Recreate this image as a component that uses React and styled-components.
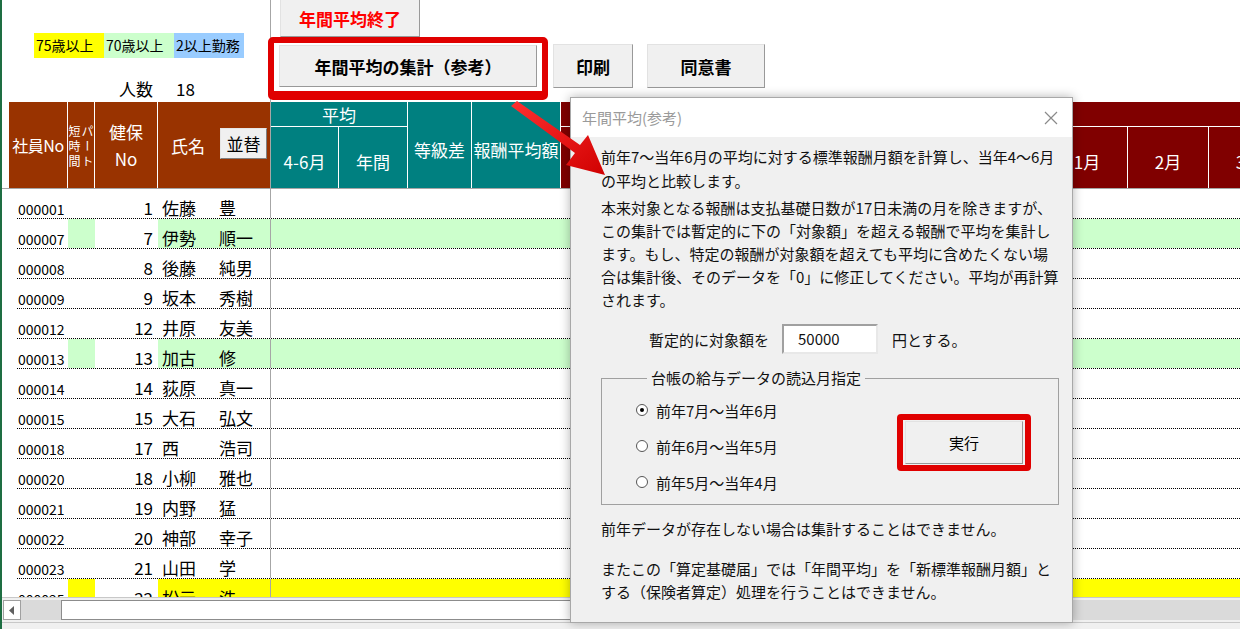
import React from 'react';
import styled, { createGlobalStyle } from 'styled-components';

const FONT = `"Noto Sans CJK JP", "Noto Sans", sans-serif`;

const GlobalStyle = createGlobalStyle`
  html, body { margin: 0; padding: 0; background: #fff; }
  body { font-family: ${FONT}; overflow: hidden; }
  * { box-sizing: border-box; }
`;

const TINTS = { green: '#ccffcc', yellow: '#ffff00', blue: '#99ccff' };

const ROWS = [
  { id: '000001', no: 1, sei: '佐藤', mei: '豊' },
  { id: '000007', no: 7, sei: '伊勢', mei: '順一', tint: 'green' },
  { id: '000008', no: 8, sei: '後藤', mei: '純男' },
  { id: '000009', no: 9, sei: '坂本', mei: '秀樹' },
  { id: '000012', no: 12, sei: '井原', mei: '友美' },
  { id: '000013', no: 13, sei: '加古', mei: '修', tint: 'green' },
  { id: '000014', no: 14, sei: '荻原', mei: '真一' },
  { id: '000015', no: 15, sei: '大石', mei: '弘文' },
  { id: '000018', no: 17, sei: '西', mei: '浩司' },
  { id: '000020', no: 18, sei: '小柳', mei: '雅也' },
  { id: '000021', no: 19, sei: '内野', mei: '猛' },
  { id: '000022', no: 20, sei: '神部', mei: '幸子' },
  { id: '000023', no: 21, sei: '山田', mei: '学' },
  { id: '000025', no: 22, sei: '松元', mei: '浩', tint: 'yellow' },
];

const MONTHS = ['7月', '8月', '9月', '10月', '11月', '12月', '1月', '2月', '3月'];

export default function App() {
  return (
    <>
      <GlobalStyle />
      <Page>
        <Top>
          <TopLeft>
            <Legend>
              <LegendItem tint="yellow">75歳以上</LegendItem>
              <LegendItem tint="green">70歳以上</LegendItem>
              <LegendItem tint="blue">2以上勤務</LegendItem>
            </Legend>
            <Count>
              <span>人数</span>
              <span>18</span>
            </Count>
          </TopLeft>
          <TopRight>
            <EndButton>年間平均終了</EndButton>
            <ButtonRow>
              <Highlight>
                <SheetButton w={258} h={42}>年間平均の集計（参考）</SheetButton>
              </Highlight>
              <SheetButton w={80} h={44} ml={5} mt={7}>印刷</SheetButton>
              <SheetButton w={118} h={44} ml={14} mt={7}>同意書</SheetButton>
            </ButtonRow>
          </TopRight>
        </Top>

        <Sheet>
          <HeadGrid>
            <Gap style={{ gridRow: '1 / 3' }} />
            <HeadCell tone="brown" span narrow>社員No</HeadCell>
            <HeadCell tone="brown" span>
              <Vertical>短時間</Vertical>
              <Vertical>パート</Vertical>
            </HeadCell>
            <HeadCell tone="brown" span>
              <TwoLine>健保<br />No</TwoLine>
            </HeadCell>
            <NameHead>
              <span>氏名</span>
              <SortButton>並替</SortButton>
            </NameHead>
            <HeadLine />
            <HeadCell tone="teal" band style={{ gridColumn: '7 / 9' }}>平均</HeadCell>
            <HeadCell tone="teal" span lower style={{ gridColumn: 9 }}>等級差</HeadCell>
            <HeadCell tone="teal" span lower style={{ gridColumn: 10 }}>報酬平均額</HeadCell>
            <HeadCell tone="maroon" band style={{ gridColumn: '11 / 20' }} />
            <HeadCell tone="teal" lower style={{ gridColumn: 7, gridRow: 2 }}>4-6月</HeadCell>
            <HeadCell tone="teal" lower style={{ gridColumn: 8, gridRow: 2 }}>年間</HeadCell>
            {MONTHS.map((m, i) => (
              <HeadCell key={m} tone="maroon" lower style={{ gridColumn: 11 + i, gridRow: 2 }}>{m}</HeadCell>
            ))}
          </HeadGrid>

          {ROWS.map(r => (
            <Row key={r.id}>
              <IdCell>{r.id}</IdCell>
              <ShortCell tint={r.tint} />
              <NoCell>{r.no}</NoCell>
              <NameCell tint={r.tint}>
                <Sei>{r.sei}</Sei>
                <span>{r.mei}</span>
              </NameCell>
              <RestCell tint={r.tint} />
            </Row>
          ))}
        </Sheet>

        <ScrollBar>
          <ArrowBox>
            <svg width="6" height="9" viewBox="0 0 6 9"><path d="M5 0 L0 4.5 L5 9 Z" fill="#606060" /></svg>
          </ArrowBox>
          <Track w={40} />
          <Thumb />
          <Track />
        </ScrollBar>
        <StatusStrip />

        <Dialog>
          <TitleBar>
            <Title>年間平均(参考)</Title>
            <svg width="14" height="14" viewBox="0 0 14 14">
              <path d="M1 1 L13 13 M13 1 L1 13" stroke="#8a8a8a" strokeWidth="1.2" />
            </svg>
          </TitleBar>
          <Body>
            <Para lh={24} mt={8}>
              前年7～当年6月の平均に対する標準報酬月額を計算し、当年4～6月<br />
              の平均と比較します。
            </Para>
            <Para lh={23} mt={3}>
              本来対象となる報酬は支払基礎日数が17日未満の月を除きますが、<br />
              この集計では暫定的に下の「対象額」を超える報酬で平均を集計し<br />
              ます。もし、特定の報酬が対象額を超えても平均に含めたくない場<br />
              合は集計後、そのデータを「0」に修正してください。平均が再計算<br />
              されます。
            </Para>
            <AmountRow>
              <span>暫定的に対象額を</span>
              <AmountInput>50000</AmountInput>
              <span>円とする。</span>
            </AmountRow>
            <Group>
              <GroupLegend>台帳の給与データの読込月指定</GroupLegend>
              <Radios>
                <RadioRow><Radio checked />前年7月～当年6月</RadioRow>
                <RadioRow><Radio />前年6月～当年5月</RadioRow>
                <RadioRow><Radio />前年5月～当年4月</RadioRow>
              </Radios>
              <ExecHighlight>
                <ExecButton>実行</ExecButton>
              </ExecHighlight>
            </Group>
            <Para lh={23} mt={12}>前年データが存在しない場合は集計することはできません。</Para>
            <Para lh={23} mt={17}>
              またこの「算定基礎届」では「年間平均」を「新標準報酬月額」と<br />
              する（保険者算定）処理を行うことはできません。
            </Para>
          </Body>
        </Dialog>

        <Pointer viewBox="0 0 110 90" width="110" height="90">
          <defs>
            <linearGradient id="arrowFill" x1="0" y1="0" x2="1" y2="1">
              <stop offset="0" stopColor="#ff3030" />
              <stop offset="1" stopColor="#d00000" />
            </linearGradient>
          </defs>
          <polygon
            points="9,11 15,6 78,50 86,40 103,80 64,70 73,58"
            fill="url(#arrowFill)"
          />
        </Pointer>
      </Page>
    </>
  );
}

const Page = styled.div`
  position: relative;
  width: 1240px;
  height: 629px;
  overflow: hidden;
  border-left: 2px solid #1e6e42;
  display: flex;
  flex-direction: column;
  font-family: ${FONT};
`;

const Top = styled.div`
  height: 102px;
  display: flex;
  flex-shrink: 0;
`;

const TopLeft = styled.div`
  width: 269px;
  border-right: 1px solid #a6a6a6;
  padding: 33px 0 0 32px;
`;

const Legend = styled.div`
  display: flex;
`;

const LegendItem = styled.div`
  width: 70px;
  height: 25px;
  background: ${p => TINTS[p.tint]};
  font-size: 14px;
  line-height: 25px;
  padding-left: 2px;
  color: #000;
`;

const Count = styled.div`
  margin: 20px 0 0 85px;
  display: flex;
  gap: 23px;
  font-size: 17px;
  line-height: 22px;
`;

const TopRight = styled.div`
  display: flex;
  flex-direction: column;
`;

const buttonFace = `
  background: #f0f0f0;
  border: 1px solid;
  border-color: #e2e2e2 #999 #999 #e2e2e2;
  display: flex;
  align-items: center;
  justify-content: center;
  font-family: ${FONT};
`;

const EndButton = styled.div`
  ${buttonFace}
  margin-left: 9px;
  width: 140px;
  height: 37px;
  border-top: none;
  color: #ff0000;
  font-weight: 700;
  font-size: 17px;
`;

const ButtonRow = styled.div`
  display: flex;
  align-items: flex-start;
`;

const Highlight = styled.div`
  margin-left: -3px;
  width: 280px;
  height: 63px;
  border: 6px solid #e00000;
  border-bottom-width: 9px;
  border-radius: 5px;
  padding: 2px 0 0 5px;
  background: #fff;
`;

const SheetButton = styled.div`
  ${buttonFace}
  width: ${p => p.w}px;
  height: ${p => p.h}px;
  margin-left: ${p => p.ml || 0}px;
  margin-top: ${p => p.mt || 0}px;
  font-size: 17px;
  font-weight: 700;
  color: #000;
`;

const Sheet = styled.div`
  height: 495px;
  overflow: hidden;
  flex-shrink: 0;
`;

const HeadGrid = styled.div`
  display: grid;
  grid-template-columns: 7px 59px 27px 63px 112px 1px 68px 69px 64px 89px repeat(9, 81px);
  grid-template-rows: 25px 61px;
  width: 1288px;
  border-bottom: 1px solid #a6a6a6;
`;

const Gap = styled.div``;

const TONES = { brown: '#993300', teal: '#008080', maroon: '#800000' };

const HeadCell = styled.div`
  background: ${p => TONES[p.tone]};
  color: #fff;
  font-size: ${p => (p.narrow ? 16 : 17)}px;
  letter-spacing: ${p => (p.narrow ? '-0.5px' : 'normal')};
  display: flex;
  align-items: center;
  justify-content: center;
  white-space: nowrap;
  overflow: hidden;
  border-right: 1px solid #fff;
  ${p => p.span && 'grid-row: 1 / 3;'}
  ${p => p.band && 'grid-row: 1; border-bottom: 1px solid #fff;'}
  ${p => p.lower && 'padding-top: 8px;'}
`;

const Vertical = styled.span`
  writing-mode: vertical-rl;
  font-size: 12px;
  line-height: 13px;
  letter-spacing: 3px;
  margin-top: 4px;
`;

const TwoLine = styled.div`
  text-align: center;
  line-height: 27px;
`;

const NameHead = styled.div`
  grid-row: 1 / 3;
  background: #993300;
  color: #fff;
  font-size: 17px;
  display: flex;
  align-items: center;
  padding: 0 0 0 13px;
  gap: 15px;
`;

const SortButton = styled.div`
  width: 47px;
  height: 31px;
  background: #f0f0f0;
  border: 1px solid;
  border-color: #e6e6e6 #808080 #808080 #e6e6e6;
  color: #000;
  font-size: 17px;
  display: flex;
  align-items: center;
  justify-content: center;
  margin-top: -3px;
`;

const HeadLine = styled.div`
  grid-row: 1 / 3;
  background: #a6a6a6;
`;

const Row = styled.div`
  display: flex;
  height: 30px;
  margin-left: 15px;
  border-bottom: 1px dotted #000;
  width: 1225px;
`;

const cellBase = `
  display: flex;
  align-items: flex-end;
  height: 100%;
  padding-bottom: 2px;
  line-height: 1;
  white-space: nowrap;
`;

const IdCell = styled.div`
  ${cellBase}
  width: 51px;
  font-size: 14px;
  padding-left: 1px;
`;

const ShortCell = styled.div`
  ${cellBase}
  width: 27px;
  background: ${p => (p.tint ? TINTS[p.tint] : 'transparent')};
`;

const NoCell = styled.div`
  ${cellBase}
  width: 63px;
  justify-content: flex-end;
  padding-right: 5px;
  font-size: 17px;
`;

const NameCell = styled.div`
  ${cellBase}
  width: 113px;
  padding-left: 4px;
  font-size: 17px;
  border-right: 1px solid #a6a6a6;
  background: ${p => (p.tint ? TINTS[p.tint] : 'transparent')};
`;

const Sei = styled.span`
  width: 57px;
`;

const RestCell = styled.div`
  flex: 1;
  height: 100%;
  background: ${p => (p.tint ? TINTS[p.tint] : 'transparent')};
`;

const ScrollBar = styled.div`
  height: 25px;
  flex-shrink: 0;
  border-top: 1px solid #c8c8c8;
  display: flex;
  align-items: center;
  padding-left: 1px;
  background: #f0f0f0;
`;

const ArrowBox = styled.div`
  width: 18px;
  height: 20px;
  background: #fff;
  border: 1px solid #a0a0a0;
  display: flex;
  align-items: center;
  justify-content: center;
`;

const Track = styled.div`
  height: 20px;
  background: #dadada;
  ${p => (p.w ? `width: ${p.w}px;` : 'flex: 1;')}
`;

const Thumb = styled.div`
  width: 560px;
  height: 20px;
  background: #fff;
  border: 1px solid #8c8c8c;
`;

const StatusStrip = styled.div`
  flex: 1;
  background: #f0f0f0;
  border-top: 1px solid #c8c8c8;
`;

const Dialog = styled.div`
  position: absolute;
  left: 568px;
  top: 97px;
  width: 503px;
  height: 526px;
  border: 1px solid #a8a8a8;
  background: #f0f0f0;
  box-shadow: 0 0 10px rgba(0, 0, 0, 0.3);
  display: flex;
  flex-direction: column;
`;

const TitleBar = styled.div`
  height: 39px;
  background: #fff;
  display: flex;
  align-items: center;
  justify-content: space-between;
  padding: 0 14px 0 11px;
  flex-shrink: 0;
`;

const Title = styled.span`
  color: #9a9a9a;
  font-size: 15px;
`;

const Body = styled.div`
  padding: 0 14px 0 30px;
  font-size: 15px;
  color: #111;
  display: flex;
  flex-direction: column;
`;

const Para = styled.p`
  margin: ${p => p.mt}px 0 0;
  line-height: ${p => p.lh}px;
  white-space: nowrap;
`;

const AmountRow = styled.div`
  margin: 13px 0 0 48px;
  display: flex;
  align-items: center;
  gap: 13px;
`;

const AmountInput = styled.div`
  width: 96px;
  height: 30px;
  background: #fff;
  border: 2px solid;
  border-color: #a0a0a0 #e8e8e8 #e8e8e8 #a0a0a0;
  padding-left: 14px;
  line-height: 26px;
  margin-right: 1px;
`;

const Group = styled.fieldset`
  margin: 13px 0 0;
  padding: 3px 0 3px 34px;
  border: 1px solid #a0a0a0;
  display: flex;
  width: 458px;
  height: 138px;
`;

const GroupLegend = styled.legend`
  padding: 0 4px;
  margin-left: 11px;
  font-size: 15px;
  line-height: 22px;
`;

const Radios = styled.div`
  display: flex;
  flex-direction: column;
`;

const RadioRow = styled.div`
  height: 36px;
  display: flex;
  align-items: center;
  gap: 8px;
`;

const Radio = styled.span`
  width: 12px;
  height: 12px;
  border-radius: 50%;
  border: 1px solid #555;
  background: #fff;
  display: flex;
  align-items: center;
  justify-content: center;
  &::after {
    content: '';
    width: 4px;
    height: 4px;
    border-radius: 50%;
    background: ${p => (p.checked ? '#000' : 'transparent')};
  }
`;

const ExecHighlight = styled.div`
  margin: 22px 0 0 auto;
  margin-right: 27px;
  width: 134px;
  height: 57px;
  border: 6px solid #e00000;
  border-radius: 4px;
  padding: 1px 1px 0 2px;
`;

const ExecButton = styled.div`
  ${buttonFace}
  width: 118px;
  height: 43px;
  font-size: 15px;
  color: #000;
`;

const Pointer = styled.svg`
  position: absolute;
  left: 500px;
  top: 95px;
  pointer-events: none;
`;
